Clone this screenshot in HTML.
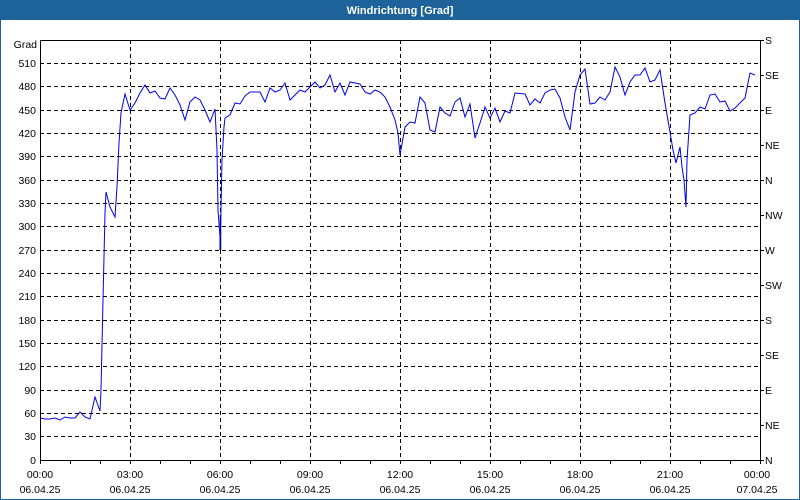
<!DOCTYPE html>
<html><head><meta charset="utf-8"><style>
html,body{margin:0;padding:0;width:800px;height:500px;overflow:hidden;background:#fff}
svg{display:block}
text{font-family:"Liberation Sans","DejaVu Sans",sans-serif;font-size:10.5px;fill:#000}
</style></head><body>
<svg width="800" height="500" viewBox="0 0 800 500" xmlns="http://www.w3.org/2000/svg">
<rect x="0" y="0" width="800" height="500" fill="#fff"/>
<rect x="0" y="0" width="800" height="20" fill="#1d6299"/>
<rect x="0.5" y="0.5" width="799" height="499" fill="none" stroke="#1d6299"/>
<text x="400" y="14" text-anchor="middle" style="font-size:11px;font-weight:bold;fill:#fff">Windrichtung [Grad]</text>
<g stroke="#000" stroke-dasharray="4,3" stroke-width="1">
<line x1="40" x2="760" y1="63.5" y2="63.5"/><line x1="40" x2="760" y1="86.5" y2="86.5"/><line x1="40" x2="760" y1="110.5" y2="110.5"/><line x1="40" x2="760" y1="133.5" y2="133.5"/><line x1="40" x2="760" y1="156.5" y2="156.5"/><line x1="40" x2="760" y1="180.5" y2="180.5"/><line x1="40" x2="760" y1="203.5" y2="203.5"/><line x1="40" x2="760" y1="226.5" y2="226.5"/><line x1="40" x2="760" y1="250.5" y2="250.5"/><line x1="40" x2="760" y1="273.5" y2="273.5"/><line x1="40" x2="760" y1="296.5" y2="296.5"/><line x1="40" x2="760" y1="320.5" y2="320.5"/><line x1="40" x2="760" y1="343.5" y2="343.5"/><line x1="40" x2="760" y1="366.5" y2="366.5"/><line x1="40" x2="760" y1="390.5" y2="390.5"/><line x1="40" x2="760" y1="413.5" y2="413.5"/><line x1="40" x2="760" y1="436.5" y2="436.5"/>
<line x1="130.5" x2="130.5" y1="40" y2="460"/><line x1="220.5" x2="220.5" y1="40" y2="460"/><line x1="310.5" x2="310.5" y1="40" y2="460"/><line x1="400.5" x2="400.5" y1="40" y2="460"/><line x1="490.5" x2="490.5" y1="40" y2="460"/><line x1="580.5" x2="580.5" y1="40" y2="460"/><line x1="670.5" x2="670.5" y1="40" y2="460"/>
</g>
<g stroke="#000" stroke-width="1" fill="none">
<polyline points="40.5,40.5 760.5,40.5 760.5,460.5 40.5,460.5 40.5,40.5"/>
<path d="M40.5 460v4M70.5 460v4M100.5 460v4M130.5 460v4M160.5 460v4M190.5 460v4M220.5 460v4M250.5 460v4M280.5 460v4M310.5 460v4M340.5 460v4M370.5 460v4M400.5 460v4M430.5 460v4M460.5 460v4M490.5 460v4M520.5 460v4M550.5 460v4M580.5 460v4M610.5 460v4M640.5 460v4M670.5 460v4M700.5 460v4M730.5 460v4M760.5 460v4"/>
<path d="M760 40.5h4M760 75.5h4M760 110.5h4M760 145.5h4M760 180.5h4M760 215.5h4M760 250.5h4M760 285.5h4M760 320.5h4M760 355.5h4M760 390.5h4M760 425.5h4M760 460.5h4"/>
</g>
<line x1="220.5" y1="215" x2="220.5" y2="250" stroke="#000" stroke-width="1.5"/>
<polyline fill="none" stroke="#0000ee" stroke-width="1" points="40,418 45,419 50,419 55,418 60,420 65,417 70,418 75,418 80,412 85,417 90,419 95,397 100,411 101,390 102,345 103,300 104,257 105,213 106,192 110,207 115,217 117,187 119,143 121,113 125,94 130,110 135,103 140,93 145,85 150,93 155,91 160,98 165,99 170,88 175,95 180,105 185,120 190,102 195,97 200,100 205,110 210,122 215,109 217,150 218,210 220,237 220,250 221,210 222,160 224,127 225,118 230,115 235,103 240,104 245,96 250,92 260,92 265,102 270,88 275,92 280,90 285,83 290,100 300,90 305,92 310,87 315,82 320,88 325,85 330,75 335,92 340,83 345,95 350,82 360,84 365,92 370,94 375,90 380,92 385,97 390,107 395,120 398,133 400,155 405,127 410,122 415,123 420,97 425,103 430,130 435,132 440,107 445,113 450,116 455,102 460,98 465,117 470,104 475,138 480,123 485,107 490,118 495,108 500,122 505,111 510,113 515,93 525,94 530,105 535,99 540,103 545,93 550,90 555,89 560,98 565,117 570,130 575,92 580,75 585,69 590,104 595,103 600,97 605,100 610,92 615,67 620,77 625,95 630,82 635,75 640,75 645,68 650,82 655,80 660,70 665,103 670,132 673,150 676,163 680,147 682,167 684,180 686,207 687,160 690,115 695,113 700,107 705,109 710,95 715,94 720,102 725,101 730,111 735,108 745,98 750,73 755,75"/>
<g text-anchor="end">
<text x="37" y="48">Grad</text>
<text x="36" y="67">510</text><text x="36" y="90">480</text><text x="36" y="114">450</text><text x="36" y="137">420</text><text x="36" y="160">390</text><text x="36" y="184">360</text><text x="36" y="207">330</text><text x="36" y="230">300</text><text x="36" y="254">270</text><text x="36" y="277">240</text><text x="36" y="300">210</text><text x="36" y="324">180</text><text x="36" y="347">150</text><text x="36" y="370">120</text><text x="36" y="394">90</text><text x="36" y="417">60</text><text x="36" y="440">30</text><text x="36" y="464">0</text>
</g>
<g>
<text x="765" y="44">S</text><text x="765" y="79">SE</text><text x="765" y="114">E</text><text x="765" y="149">NE</text><text x="765" y="184">N</text><text x="765" y="219">NW</text><text x="765" y="254">W</text><text x="765" y="289">SW</text><text x="765" y="324">S</text><text x="765" y="359">SE</text><text x="765" y="394">E</text><text x="765" y="429">NE</text><text x="765" y="464">N</text>
</g>
<g text-anchor="middle">
<text x="40" y="478">00:00</text><text x="130" y="478">03:00</text><text x="220" y="478">06:00</text><text x="310" y="478">09:00</text><text x="400" y="478">12:00</text><text x="490" y="478">15:00</text><text x="580" y="478">18:00</text><text x="670" y="478">21:00</text><text x="757" y="478">00:00</text>
<text x="40" y="493">06.04.25</text><text x="130" y="493">06.04.25</text><text x="220" y="493">06.04.25</text><text x="310" y="493">06.04.25</text><text x="400" y="493">06.04.25</text><text x="490" y="493">06.04.25</text><text x="580" y="493">06.04.25</text><text x="670" y="493">06.04.25</text><text x="757" y="493">07.04.25</text>
</g>
</svg>
</body></html>
